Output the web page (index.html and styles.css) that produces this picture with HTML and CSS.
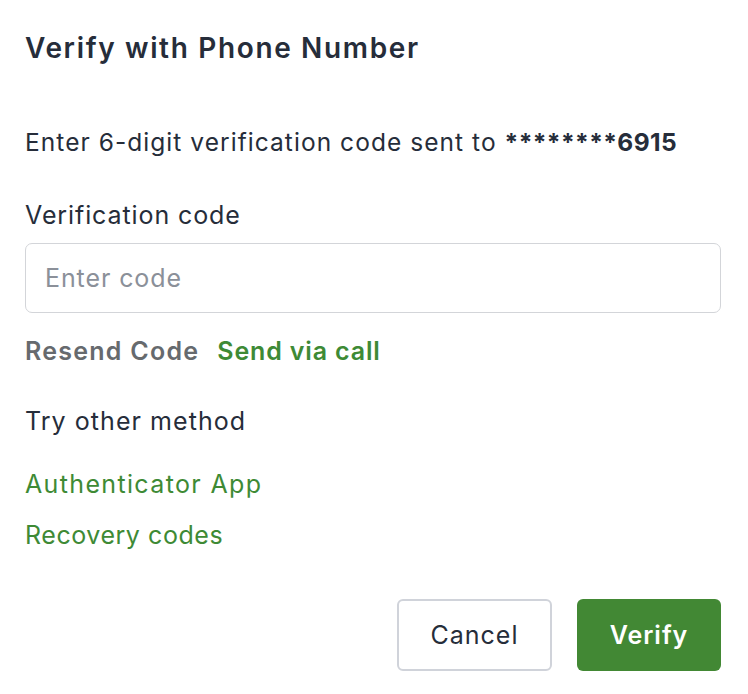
FILE: index.html
```html
<!DOCTYPE html>
<html>
<head>
<meta charset="utf-8">
<link rel="stylesheet" href="styles.css">
</head>
<body>
<div class="dialog">
  <h1 class="title">Verify with Phone Number</h1>
  <p class="sent">Enter 6-digit verification code sent to <b>********6915</b></p>
  <label class="label" for="code">Verification code</label>
  <input id="code" class="input" type="text" placeholder="Enter code">
  <div class="resend">
    <span class="resend-text">Resend Code</span>
    <a class="link strong">Send via call</a>
  </div>
  <p class="other">Try other method</p>
  <a class="link method">Authenticator App</a>
  <a class="link method second">Recovery codes</a>
  <div class="actions">
    <button class="btn btn-cancel">Cancel</button>
    <button class="btn btn-verify">Verify</button>
  </div>
</div>
</body>
</html>
```
FILE: styles.css
```css
* { box-sizing: border-box; }
html, body { margin: 0; padding: 0; background: #fff; }
body { font-family: Inter, "Noto Sans", sans-serif; color: #262d3a; letter-spacing: 0.9px; }
.dialog { width: 748px; padding: 30px 27px 0 25px; display: flex; flex-direction: column; align-items: flex-start; }
.title { margin: 0; font-size: 28px; line-height: 36px; font-weight: 600; color: #262d3a; letter-spacing: 1.65px; }
.sent { margin: 60px 0 0; font-size: 24.5px; line-height: 32px; letter-spacing: 1.05px; }
.sent b { font-weight: 700; letter-spacing: 0.4px; }
.label { margin-top: 41px; font-size: 25px; line-height: 32px; }
.input { margin-top: 12px; width: 100%; height: 70px; border: 1.5px solid #d3d5d9; border-radius: 7px; padding: 0 19px; font-family: inherit; font-size: 25px; letter-spacing: 0.9px; color: #262d3a; outline: none; }
.input::placeholder { color: #8b9099; }
.resend { margin-top: 22px; display: flex; gap: 18px; font-size: 25px; line-height: 32px; font-weight: 600; }
.resend-text { color: #666a6e; letter-spacing: 1.25px; }
.link { color: #3e8a35; text-decoration: none; font-size: 25px; line-height: 32px; }
.strong { font-weight: 600; letter-spacing: 0.85px; }
.other { margin: 38px 0 0; font-size: 25px; line-height: 32px; letter-spacing: 1.05px; }
.method { margin-top: 31px; letter-spacing: 1.35px; }
.second { margin-top: 19px; letter-spacing: 0.55px; }
.actions { align-self: stretch; display: flex; justify-content: flex-end; gap: 25px; margin-top: 48px; }
.btn { height: 72px; border-radius: 6px; font-family: inherit; font-size: 25px; letter-spacing: 1px; }
.btn-cancel { width: 155px; background: #fff; border: 2px solid #d0d3da; color: #262d3a; }
.btn-verify { width: 144px; background: #428834; border: none; color: #fff; font-weight: 600; }
```
